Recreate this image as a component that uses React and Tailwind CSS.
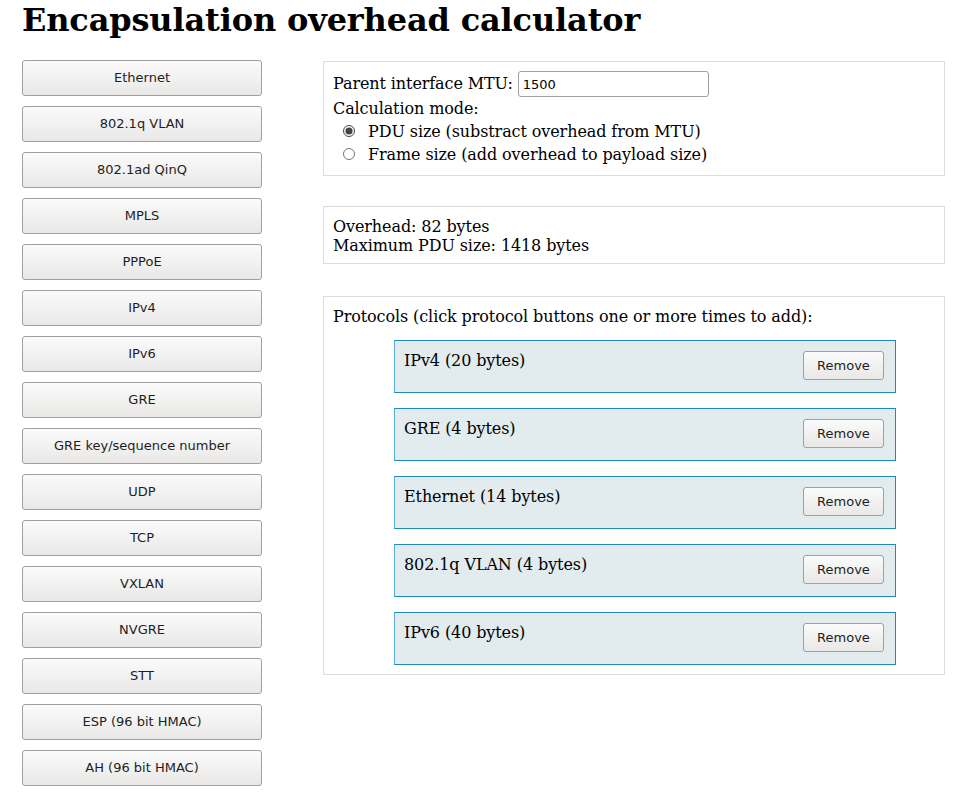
import { useState } from 'react';

const PROTOCOLS = [
  { name: 'Ethernet', size: 14 },
  { name: '802.1q VLAN', size: 4 },
  { name: '802.1ad QinQ', size: 8 },
  { name: 'MPLS', size: 4 },
  { name: 'PPPoE', size: 8 },
  { name: 'IPv4', size: 20 },
  { name: 'IPv6', size: 40 },
  { name: 'GRE', size: 4 },
  { name: 'GRE key/sequence number', size: 4 },
  { name: 'UDP', size: 8 },
  { name: 'TCP', size: 20 },
  { name: 'VXLAN', size: 8 },
  { name: 'NVGRE', size: 8 },
  { name: 'STT', size: 18 },
  { name: 'ESP (96 bit HMAC)', size: 38 },
  { name: 'AH (96 bit HMAC)', size: 24 },
];

const btn =
  'border border-[#a0a0a0] rounded-[3px] bg-gradient-to-b from-[#fbfbfb] to-[#e9e8e7] text-[13px] text-[#1e1e1e] [font-family:"DejaVu_Sans",sans-serif]';

export default function App() {
  const [mtu, setMtu] = useState('1500');
  const [mode, setMode] = useState('pdu');
  const [stack, setStack] = useState([
    { name: 'IPv4', size: 20 },
    { name: 'GRE', size: 4 },
    { name: 'Ethernet', size: 14 },
    { name: '802.1q VLAN', size: 4 },
    { name: 'IPv6', size: 40 },
  ]);

  const overhead = stack.reduce((s, p) => s + p.size, 0);
  const mtuNum = parseInt(mtu, 10) || 0;

  return (
    <div className='min-h-[802px] bg-white text-black px-[22px] [font-family:"DejaVu_Serif",serif]'>
      <h1 className="text-[32px] font-bold leading-[37px] h-[39px] pt-[2px] tracking-[-0.15px]">
        Encapsulation overhead calculator
      </h1>

      <div className="flex mt-[21px]">
        {/* protocol buttons */}
        <div className="flex flex-col gap-[10px] w-[240px] shrink-0">
          {PROTOCOLS.map((p) => (
            <button
              key={p.name}
              onClick={() => setStack([...stack, p])}
              className={`${btn} h-[36px] w-full`}
            >
              {p.name}
            </button>
          ))}
        </div>

        <div className="ml-[61px] w-[622px] flex flex-col text-[16px] tracking-[-0.1px]">
          {/* settings */}
          <div className="mt-px border border-[#dcdcdc] px-[9px] pt-[9px] pb-[9px]">
            <div className="flex items-center h-[26px]">
              <span>Parent interface MTU:</span>
              <input
                value={mtu}
                onChange={(e) => setMtu(e.target.value)}
                className='ml-[5px] w-[191px] h-[26px] border border-[#a0a0a0] rounded-[3px] px-[4px] text-[13px] tracking-normal outline-none [font-family:"DejaVu_Sans",sans-serif]'
              />
            </div>
            <div className="h-[23px] flex items-center">Calculation mode:</div>
            <label className="h-[23px] flex items-center pl-[10px]">
              <input
                type="radio"
                checked={mode === 'pdu'}
                onChange={() => setMode('pdu')}
                className="w-[12px] h-[12px] accent-[#444] m-0 mr-[13px] -mt-[2px]"
              />
              PDU size (substract overhead from MTU)
            </label>
            <label className="h-[23px] flex items-center pl-[10px]">
              <input
                type="radio"
                checked={mode === 'frame'}
                onChange={() => setMode('frame')}
                className="w-[12px] h-[12px] accent-[#444] m-0 mr-[13px] -mt-[2px]"
              />
              Frame size (add overhead to payload size)
            </label>
          </div>

          {/* result */}
          <div className="mt-[30px] border border-[#dcdcdc] px-[9px] pt-[10px] pb-[8px] leading-[19px]">
            <div>Overhead: {overhead} bytes</div>
            {mode === 'pdu' ? (
              <div>Maximum PDU size: {mtuNum - overhead} bytes</div>
            ) : (
              <div>Maximum frame size: {mtuNum + overhead} bytes</div>
            )}
          </div>

          {/* stack */}
          <div className="mt-[32px] border border-[#dcdcdc] px-[9px] pt-[10px] pb-[9px]">
            <div className="leading-[19px]">Protocols (click protocol buttons one or more times to add):</div>
            <div className="flex flex-col gap-[15px] mt-[14px] ml-[61px] w-[502px]">
              {stack.map((p, i) => (
                <div
                  key={i}
                  className="h-[53px] bg-[#e2ebee] border border-[#1e8ab8] border-l-[#56a9cf] flex justify-between pl-[9px] pr-[11px] pt-[9px]"
                >
                  <span className="leading-[19px] pt-[1px]">
                    {p.name} ({p.size} bytes)
                  </span>
                  <button
                    onClick={() => setStack(stack.filter((_, j) => j !== i))}
                    className={`${btn} w-[81px] h-[29px] mt-px tracking-normal`}
                  >
                    Remove
                  </button>
                </div>
              ))}
            </div>
          </div>
        </div>
      </div>
    </div>
  );
}
